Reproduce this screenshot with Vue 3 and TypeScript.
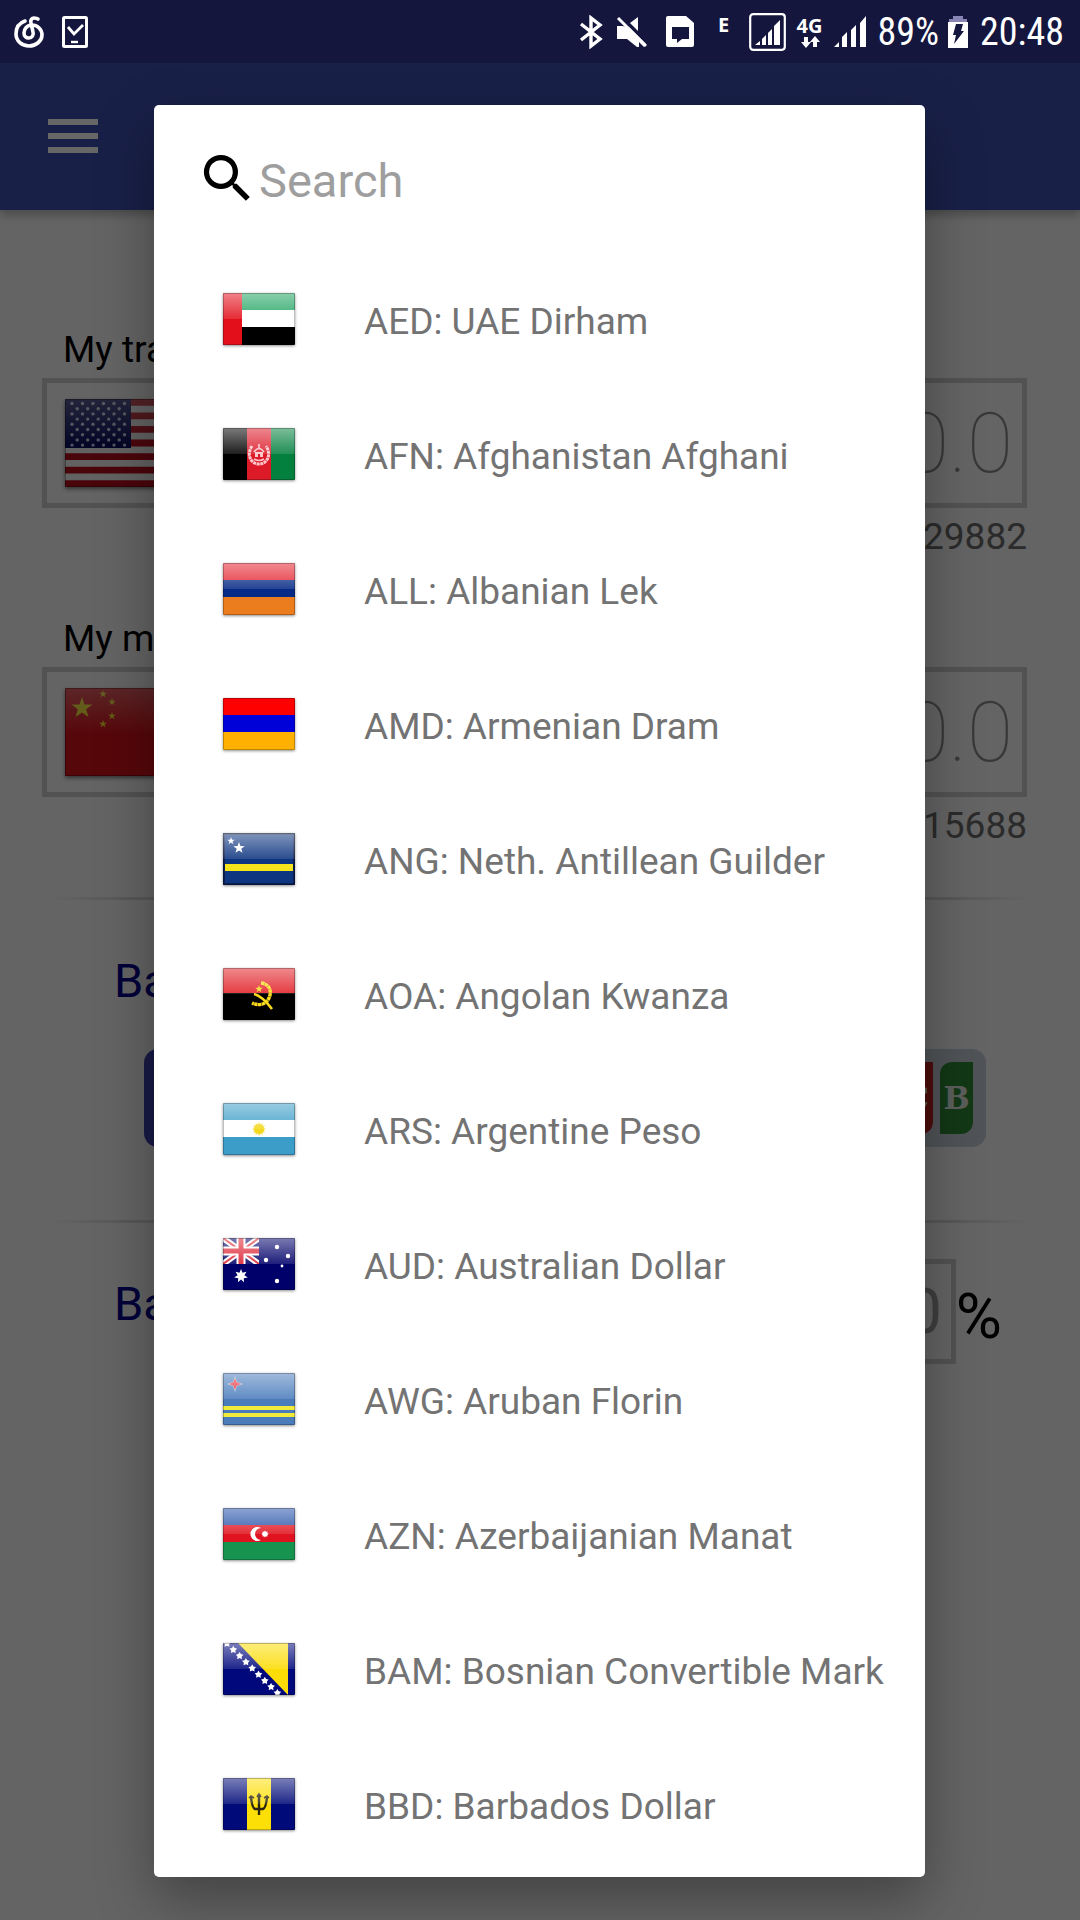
<script setup lang="ts">
import { ref } from 'vue'

interface Currency {
  code: string
  name: string
  matte?: boolean
}

const query = ref('')
const amountFrom = ref('')
const amountTo = ref('')
const rate = ref('')

const currencies: Currency[] = [
  { code: 'AED', name: 'UAE Dirham' },
  { code: 'AFN', name: 'Afghanistan Afghani' },
  { code: 'ALL', name: 'Albanian Lek' },
  { code: 'AMD', name: 'Armenian Dram', matte: true },
  { code: 'ANG', name: 'Neth. Antillean Guilder' },
  { code: 'AOA', name: 'Angolan Kwanza' },
  { code: 'ARS', name: 'Argentine Peso' },
  { code: 'AUD', name: 'Australian Dollar' },
  { code: 'AWG', name: 'Aruban Florin' },
  { code: 'AZN', name: 'Azerbaijanian Manat' },
  { code: 'BAM', name: 'Bosnian Convertible Mark' },
  { code: 'BBD', name: 'Barbados Dollar' },
]

/** Points of a star polygon, first point up. */
function star(cx: number, cy: number, r: number, inner = 0.4, n = 5): string {
  const pts: string[] = []
  for (let i = 0; i < n * 2; i++) {
    const rad = i % 2 ? r * inner : r
    const a = (Math.PI * i) / n - Math.PI / 2
    pts.push(`${(cx + rad * Math.cos(a)).toFixed(2)},${(cy + rad * Math.sin(a)).toFixed(2)}`)
  }
  return pts.join(' ')
}

const usStars: { x: number; y: number }[] = []
for (let row = 0; row < 9; row++) {
  const count = row % 2 ? 5 : 6
  for (let i = 0; i < count; i++) {
    usStars.push({ x: 7 + i * 10.5 + (row % 2 ? 5.2 : 0), y: 4.5 + row * 5.2 })
  }
}
const bosniaStars = [0, 1, 2, 3, 4, 5, 6, 7, 8].map((i) => ({ x: 4 + i * 6.3, y: 0.5 + i * 6.2 }))
</script>

<template>
  <div class="screen">
    <header class="status">
      <div class="status-left">
        <svg width="30" height="32" viewBox="0 0 30 32" fill="none" stroke="#fff" stroke-width="3.6" stroke-linecap="round">
          <path d="M11 5C5 7 2 12 2 18c0 7 6 12 13 12s13-5 13-11c0-6-5-10-10-10-5 0-8 4-8 8 0 3 2 5 5 5 3 0 5-3 4-6L17 7c-1-3 1-5 3-5 2 0 3 0 4 1" />
        </svg>
        <svg width="26" height="32" viewBox="0 0 26 32" fill="none" stroke="#fff">
          <rect x="1.5" y="1.5" width="23" height="29" rx="1" stroke-width="3" />
          <path d="M6 11l6 7 9-9" stroke-width="2.8" />
          <path d="M9 26h7" stroke-width="2.4" />
        </svg>
      </div>
      <div class="status-right">
        <svg width="24" height="34" viewBox="0 0 24 34" fill="none" stroke="#fff" stroke-width="3.4">
          <path d="M2 9l19 15-9 7V3l9 7L2 25" />
        </svg>
        <svg width="34" height="34" viewBox="0 0 34 34" fill="#fff">
          <path d="M2 11h5l7 1 17 17-2 3-5-5v5h-2L12 24H2zM15 8l8-6v14z" />
          <path d="M3 3l28 28" stroke="#fff" stroke-width="3" />
        </svg>
        <svg width="38" height="34" viewBox="0 0 38 34" fill="#fff">
          <path fill-rule="evenodd" d="M7 1h18l8 7v22q0 2-2 2H7q-2 0-2-2V3q0-2 2-2zM11 12v12h5v4l5-4h7V12z" />
        </svg>
        <span class="net net-e">E</span>
        <svg width="37" height="38" viewBox="0 0 37 38" fill="#fff">
          <rect x="1.2" y="1.2" width="34.6" height="35.6" rx="3" fill="none" stroke="#fff" stroke-width="2.2" />
          <path d="M6 32l5-4v4zM13 26l4-4v10h-4zM19 20l4-4v16h-4zM25 13l6-6v25h-6z" />
        </svg>
        <span class="net net-4g">
          <span>4G</span>
          <svg width="20" height="12" viewBox="0 0 20 12" fill="#fff">
            <path d="M4 1h4v5h3l-5 6-5-6h3zM13 11h4V6h3l-5-6-5 6h3z" />
          </svg>
        </span>
        <svg width="32" height="32" viewBox="0 0 32 32" fill="#fff">
          <path d="M0 31l5-5v5zM8 21l5-5v15H8zM17 14l5-5v22h-5zM26 7l6-7v31h-6z" />
        </svg>
        <div class="battery">
          <span class="clock">89%</span>
          <svg width="20" height="32" viewBox="0 0 20 32">
            <path d="M5 0h10v3h4v3H1V3h4z" fill="#8884b4" />
            <path d="M0 6h20v26H0z" fill="#fff" />
            <path d="M8 8h7l-2 7h3L6 28l2-9H5z" fill="#14163e" />
          </svg>
        </div>
        <span class="clock">20:48</span>
      </div>
    </header>

    <nav class="toolbar">
      <button class="menu" type="button" aria-label="Menu">
        <svg width="50" height="36" viewBox="0 0 50 36" fill="#fff">
          <path d="M0 0h50v6H0zM0 14h50v6H0zM0 28h50v6H0z" />
        </svg>
      </button>
    </nav>

    <main class="content">
      <section class="field">
        <label for="from">My tra</label>
        <div class="box">
          <button type="button" class="pick" aria-label="USD">
            <svg width="122" height="88" viewBox="0 0 122 88">
              <rect width="122" height="88" fill="#f5f5f5" />
              <path v-for="i in 7" :key="i" :d="`M0 ${(i - 1) * 13.54}h122v6.77H0z`" fill="#b80d1c" />
              <rect width="66" height="49" fill="#0c0f60" />
              <circle v-for="(s, i) in usStars" :key="i" :cx="s.x" :cy="s.y" r="1.7" fill="#ccd0ea" />
              <rect width="122" height="44" fill="url(#gloss-soft)" />
              <rect x=".5" y=".5" width="121" height="87" fill="none" stroke="#000" stroke-opacity=".3" />
            </svg>
          </button>
          <input id="from" v-model="amountFrom" class="amount" inputmode="decimal" placeholder="0.0" />
        </div>
        <p>29882</p>
      </section>

      <section class="field">
        <label for="to">My m</label>
        <div class="box">
          <button type="button" class="pick" aria-label="CNY">
            <svg width="122" height="88" viewBox="0 0 122 88">
              <rect width="122" height="88" fill="#d8121a" />
              <g fill="#f7e017">
                <polygon :points="star(17, 20, 11)" />
                <polygon :points="star(38, 6, 4)" />
                <polygon :points="star(47, 14, 4)" />
                <polygon :points="star(47, 28, 4)" />
                <polygon :points="star(38, 36, 4)" />
              </g>
              <rect width="122" height="44" fill="url(#gloss-soft)" />
              <rect x=".5" y=".5" width="121" height="87" fill="none" stroke="#000" stroke-opacity=".3" />
            </svg>
          </button>
          <input id="to" v-model="amountTo" class="amount" inputmode="decimal" placeholder="0.0" />
        </div>
        <p>15688</p>
      </section>

      <hr />
      <h2>Ba</h2>
      <div class="cards">
        <span class="card card-blue"></span>
        <span class="card card-jcb">
          <b class="panel red">C</b>
          <b class="panel green">B</b>
        </span>
      </div>

      <hr />
      <div class="fee">
        <h2><label for="fee">Ba</label></h2>
        <input id="fee" v-model="rate" inputmode="decimal" placeholder="0" />
        <span>%</span>
      </div>
    </main>

    <div class="overlay">
      <section class="dialog" role="dialog" aria-modal="true" aria-label="Search">
        <div class="search">
          <svg width="63" height="63" viewBox="0 0 24 24">
            <path d="M15.5 14h-.79l-.28-.27A6.47 6.47 0 0 0 16 9.5 6.5 6.5 0 1 0 9.5 16c1.61 0 3.09-.59 4.23-1.57l.27.28v.79l5 4.99L20.49 19l-4.99-5zm-6 0a4.5 4.5 0 1 1 0-9 4.5 4.5 0 0 1 0 9z" />
          </svg>
          <input v-model="query" type="text" placeholder="Search" aria-label="Search" />
        </div>

        <ul>
          <li v-for="c in currencies" :key="c.code">
            <button type="button" class="row">
              <svg class="flag" width="72" height="52" viewBox="0 0 72 52" aria-hidden="true">
                <g v-if="c.code === 'AED'">
                  <path d="M0 0h72v18H0z" fill="#1fa35f" />
                  <path d="M0 17h72v18H0z" fill="#fff" />
                  <path d="M0 34h72v18H0z" fill="#000" />
                  <path d="M0 0h19v52H0z" fill="#e30f1b" />
                </g>
                <g v-else-if="c.code === 'AFN'">
                  <path d="M0 0h24v52H0z" fill="#000" />
                  <path d="M24 0h25v52H24z" fill="#dc1a28" />
                  <path d="M48 0h24v52H48z" fill="#04803e" />
                  <g fill="none" stroke="#fcc6ca">
                    <path d="M29 18c-6 9-1 18 7 18s13-9 7-18" stroke-width="3" stroke-dasharray="3 .6" />
                    <path d="M31 31q5 3 10 0M36 16v4M31 24q5-7 10 0" stroke-width="1.6" />
                  </g>
                  <path d="M32 24h8v5h-3v-3h-2v3h-3z" fill="#fcc6ca" />
                </g>
                <g v-else-if="c.code === 'ALL'">
                  <path d="M0 0h72v18H0z" fill="#e4202c" />
                  <path d="M0 17h72v18H0z" fill="#062a86" />
                  <path d="M0 34h72v18H0z" fill="#ec7d1e" />
                </g>
                <g v-else-if="c.code === 'AMD'">
                  <path d="M0 0h72v18H0z" fill="#f00" />
                  <path d="M0 17h72v18H0z" fill="#0000d8" />
                  <path d="M0 34h72v18H0z" fill="#ffb000" />
                </g>
                <g v-else-if="c.code === 'ANG'">
                  <path d="M0 0h72v52H0z" fill="#0d3580" />
                  <path d="M0 31h72v7H0z" fill="#f5e31c" />
                  <polygon :points="star(8, 8, 4)" fill="#fff" />
                  <polygon :points="star(16, 15, 6)" fill="#fff" />
                  <rect x="1" y="1" width="70" height="50" fill="none" stroke="#0a1e50" stroke-width="2" />
                </g>
                <g v-else-if="c.code === 'AOA'">
                  <path d="M0 0h72v26H0z" fill="#e11f26" />
                  <path d="M0 25h72v27H0z" fill="#000" />
                  <g fill="none" stroke="#fbdc1c">
                    <path d="M38 15c9 1 11 9 8 15-3 7-11 8-17 5" stroke-width="3.4" stroke-dasharray="3.4 .4" />
                    <path d="M31 26q8 2 18 15" stroke-width="2.6" />
                  </g>
                  <polygon :points="star(36, 21, 4)" fill="#fbdc1c" />
                </g>
                <g v-else-if="c.code === 'ARS'">
                  <path d="M0 0h72v18H0z" fill="#3c9dc8" />
                  <path d="M0 17h72v18H0z" fill="#fff" />
                  <path d="M0 34h72v18H0z" fill="#3c9dc8" />
                  <circle cx="36" cy="26" r="5" fill="#f3d91f" />
                  <polygon :points="star(36, 26, 7, 0.7, 12)" fill="#f3d91f" fill-opacity=".7" />
                </g>
                <g v-else-if="c.code === 'AUD'">
                  <path d="M0 0h72v52H0z" fill="#00006a" />
                  <svg width="36" height="26" viewBox="0 0 36 26">
                    <path d="M0 0l36 26M36 0L0 26" stroke="#fff" stroke-width="6" />
                    <path d="M0 0l36 26M36 0L0 26" stroke="#dc2030" stroke-width="2" />
                    <path d="M18 0v26M0 13h36" stroke="#fff" stroke-width="9" />
                    <path d="M18 0v26M0 13h36" stroke="#dc2030" stroke-width="5" />
                  </svg>
                  <g fill="#fff">
                    <polygon :points="star(18, 38, 7, 0.5, 7)" />
                    <circle cx="54" cy="9" r="2.2" />
                    <circle cx="65" cy="18" r="2.2" />
                    <circle cx="43" cy="22" r="2.2" />
                    <circle cx="59" cy="28" r="1.4" />
                    <circle cx="54" cy="43" r="2.2" />
                  </g>
                </g>
                <g v-else-if="c.code === 'AWG'">
                  <path d="M0 0h72v52H0z" fill="#4a7cbc" />
                  <path d="M0 33h72v4H0zM0 40h72v4H0z" fill="#f2ea3a" />
                  <polygon :points="star(12, 11, 8, 0.35, 4)" fill="#fff" fill-opacity=".6" />
                  <polygon :points="star(12, 11, 6, 0.4, 4)" fill="#e8343e" />
                </g>
                <g v-else-if="c.code === 'AZN'">
                  <path d="M0 0h72v18H0z" fill="#2450a8" />
                  <path d="M0 17h72v18H0z" fill="#e01420" />
                  <path d="M0 34h72v18H0z" fill="#16944f" />
                  <path d="M38 20a7 7 0 1 0 0 12 5 5 0 1 1 0-12z" fill="#fff" />
                  <polygon :points="star(42, 26, 3.6, 0.7, 8)" fill="#fff" />
                </g>
                <g v-else-if="c.code === 'BAM'">
                  <path d="M0 0h72v52H0z" fill="#00087c" />
                  <path d="M15 0h50v52z" fill="#fbdc04" />
                  <polygon v-for="s in bosniaStars" :key="s.x" :points="star(s.x, s.y, 4, 0.55)" fill="#fff" />
                </g>
                <g v-else>
                  <path d="M0 0h72v52H0z" fill="#000a78" />
                  <path d="M24 0h24v52H24z" fill="#fddf08" />
                  <g fill="none" stroke="#2a2410" stroke-width="2.4">
                    <path d="M36 16v21M28 19q1 11 4 12h8q3-1 4-12" />
                    <path d="M34 19l2-3 2 3M26 20l2-2 3 2M41 20l3-2 2 2" stroke-width="1.6" />
                  </g>
                </g>
                <rect v-if="!c.matte" width="72" height="26" fill="url(#gloss)" />
                <rect x=".5" y=".5" width="71" height="51" fill="none" stroke="#000" stroke-opacity=".25" />
              </svg>
              <span>{{ c.code }}: {{ c.name }}</span>
            </button>
          </li>
        </ul>
      </section>
    </div>

    <svg class="defs" width="0" height="0" aria-hidden="true">
      <defs>
        <linearGradient id="gloss" x1="0" y1="0" x2="0" y2="1">
          <stop offset="0" stop-color="#fff" stop-opacity=".48" />
          <stop offset="1" stop-color="#fff" stop-opacity=".12" />
        </linearGradient>
        <linearGradient id="gloss-soft" x1="0" y1="0" x2="0" y2="1">
          <stop offset="0" stop-color="#fff" stop-opacity=".32" />
          <stop offset="1" stop-color="#fff" stop-opacity=".02" />
        </linearGradient>
      </defs>
    </svg>
  </div>
</template>

<style>
body {
  margin: 0;
}
</style>

<style scoped>
.screen {
  position: relative;
  min-height: 100vh;
  background: #fafafa;
  font-family: Roboto, "Noto Sans", sans-serif;
  font-size: 37px;
  line-height: 43px;
  color: #000;
  overflow: hidden;
}
.screen * {
  box-sizing: border-box;
}
button {
  border: 0;
  padding: 0;
  background: none;
  font: inherit;
  color: inherit;
}
input {
  min-width: 0;
  padding: 0;
  border: 0;
  outline: 0;
  background: none;
  font-family: inherit;
}
input::placeholder {
  color: #9e9e9e;
  opacity: 1;
}
h2,
p,
ul {
  margin: 0;
  padding: 0;
}
svg {
  display: block;
  flex: none;
}
.defs {
  position: absolute;
}

.status {
  position: relative;
  z-index: 2;
  display: flex;
  justify-content: space-between;
  height: 63px;
  padding: 0 16px 0 14px;
  background: #14163e;
  color: #fff;
}
.status-left,
.status-right {
  display: flex;
  align-items: center;
  gap: 12px;
}
.status-left {
  gap: 18px;
}
.battery {
  display: flex;
  align-items: center;
  gap: 9px;
}
.net {
  font: 700 20px/20px "Open Sans", sans-serif;
  text-align: center;
}
.net-e {
  width: 26px;
  padding-bottom: 14px;
}
.net-4g {
  width: 24px;
  display: flex;
  flex-direction: column;
  align-items: center;
}
.clock {
  font: 400 38px/44px "Roboto Condensed", "Liberation Sans Narrow", Roboto, sans-serif;
}

.toolbar {
  position: relative;
  display: flex;
  align-items: center;
  height: 147px;
  padding: 0 48px;
  background: #3f51b5;
  box-shadow: 0 4px 10px rgba(0, 0, 0, 0.3);
}

.content {
  padding-top: 118px;
}
.field {
  display: flex;
  flex-direction: column;
  margin: 0 53px 59px 42px;
}
.field label {
  margin-left: 21px;
}
.box {
  display: flex;
  align-items: center;
  height: 130px;
  margin: 7px 0;
  padding: 0 9px 0 18px;
  border: 5px solid #cdcdcd;
}
.pick {
  box-shadow: 0 2px 4px rgba(0, 0, 0, 0.5);
}
.amount {
  flex: 1;
  height: 100px;
  font-size: 84px;
  font-weight: 100;
  text-align: right;
}
.amount::placeholder {
  color: #8c8c8c;
}
.field p {
  text-align: right;
  color: #6c6c6c;
}
hr {
  height: 3px;
  margin: -9px 48px 0;
  border: 0;
  background: linear-gradient(90deg, transparent, #dadada 8%, #dadada 92%, transparent);
}
h2 {
  margin: 53px 0 0 114px;
  font-size: 47px;
  line-height: 55px;
  font-weight: 400;
  color: #000090;
}
.cards {
  display: flex;
  justify-content: space-between;
  margin: 41px 94px 82px 144px;
}
.card {
  display: flex;
  justify-content: flex-end;
  gap: 7px;
  width: 140px;
  height: 98px;
  padding: 13px;
  border-radius: 14px;
}
.card-blue {
  background: #3c41b0;
}
.card-jcb {
  background: #c8d0da;
}
.panel {
  width: 33px;
  border-radius: 12px 0;
  font: 700 31px/72px "DejaVu Serif", serif;
  text-align: center;
  color: #e6ece6;
}
.red {
  background: #c02424;
}
.green {
  background: #2d8c37;
}
.fee {
  display: flex;
  align-items: center;
  padding: 36px 0 0;
  margin-right: 78px;
}
.fee h2 {
  align-self: flex-start;
  margin-top: 17px;
}
.fee input {
  flex: 1;
  height: 105px;
  margin-left: 300px;
  padding-right: 9px;
  border: 5px solid #cdcdcd;
  font-size: 63px;
  text-align: right;
}
.fee > span {
  font-size: 63px;
  line-height: 74px;
  padding-top: 10px;
}

.overlay {
  position: absolute;
  inset: 0;
  z-index: 1;
  display: flex;
  padding: 105px 155px 43px 154px;
  background: rgba(0, 0, 0, 0.6);
}
.dialog {
  flex: 1;
  min-width: 0;
  overflow: hidden;
  border-radius: 5px;
  background: #fff;
  box-shadow: 0 22px 56px rgba(0, 0, 0, 0.34);
}
.search {
  display: flex;
  align-items: center;
  padding: 42px 42px 44px;
}
.search input {
  flex: 1;
  padding-top: 4px;
  font-size: 47px;
  line-height: 55px;
}
ul {
  list-style: none;
}
.row {
  display: flex;
  align-items: center;
  gap: 69px;
  width: 100%;
  height: 135px;
  padding-left: 69px;
  text-align: left;
  white-space: nowrap;
  color: #737373;
}
.flag {
  margin-bottom: 5px;
  border-radius: 1px;
  box-shadow: 0 1px 3px rgba(0, 0, 0, 0.45);
}
</style>
